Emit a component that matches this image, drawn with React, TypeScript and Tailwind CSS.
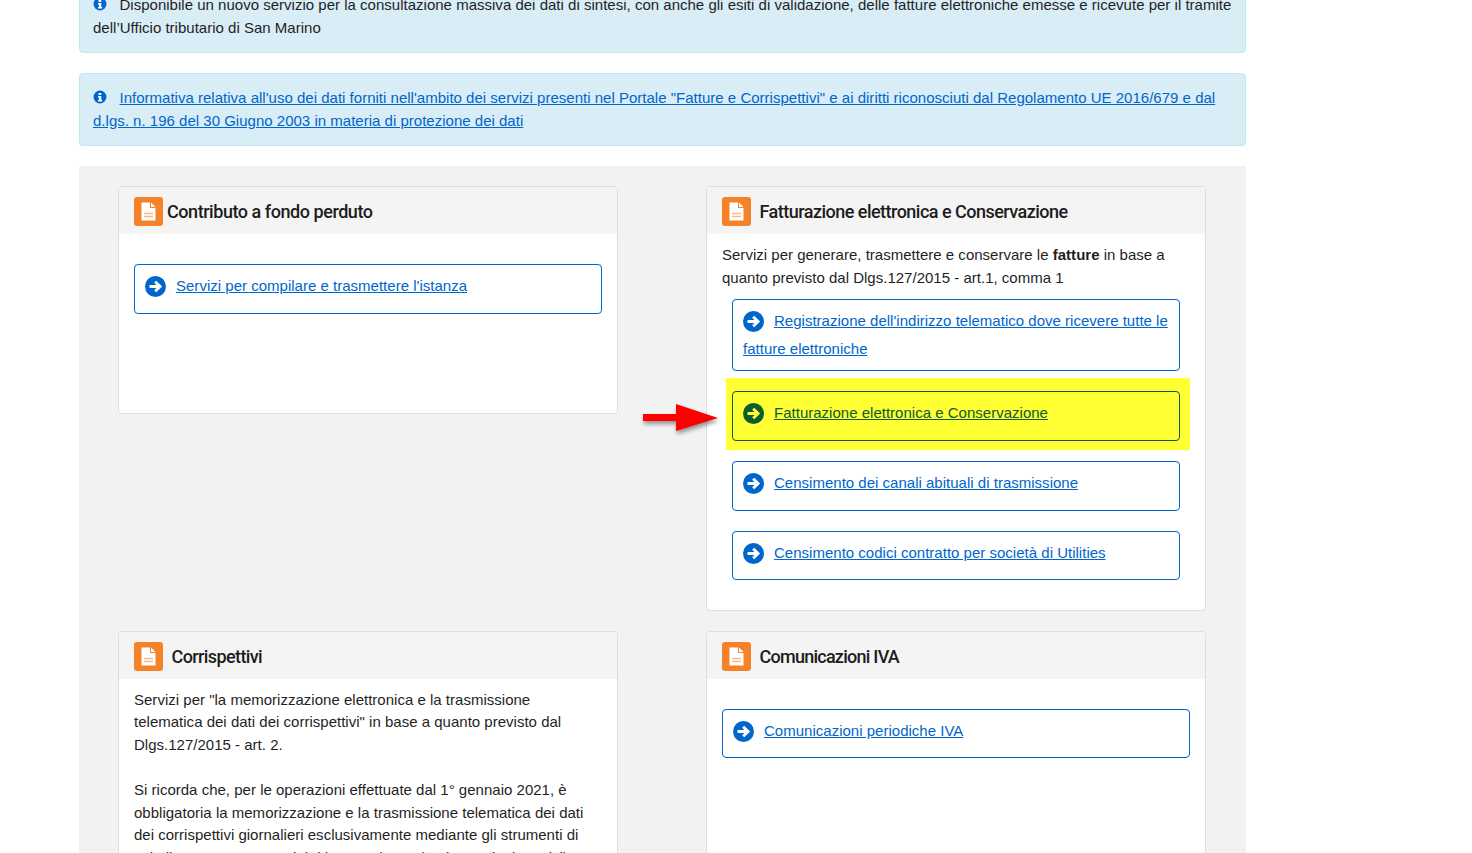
import React from 'react';

const InfoIcon: React.FC = () => (
  <svg className="mr-[12.5px] inline-block align-[-1px]" width="14" height="14" viewBox="0 0 14 14">
    <circle cx="7" cy="7" r="6.5" fill="#0066cc" />
    <path d="M5.5 3H8.3V5H5.5ZM5 6H8.3V10H9.2V11.4H5V10H5.9V7.4H5Z" fill="#fff" />
  </svg>
);

const ArrowIcon: React.FC<{ highlighted?: boolean }> = ({ highlighted }) => (
  <svg className="mr-[10px] inline-block align-[-6px]" width="21" height="21" viewBox="0 0 21 21">
    <circle cx="10.5" cy="10.5" r="10.5" fill="currentColor" />
    <path
      d="M4.5 10.5H14M10.2 5.8L15 10.5L10.2 15.2"
      fill="none"
      stroke={highlighted ? '#ffff33' : '#fff'}
      strokeWidth="3"
    />
  </svg>
);

const DocIcon: React.FC = () => (
  <div className="mt-[2px] flex h-[29px] w-[28.5px] shrink-0 items-center justify-center rounded-[3px] bg-[#f58228]">
    <svg width="15" height="19" viewBox="0 0 15 19">
      <path d="M0.5 0.5H9V6H14.5V18.5H0.5Z" fill="#fff" />
      <path d="M10 0.5L14.5 5H10Z" fill="#fff" />
      <path d="M3 11.5H12M3 14.5H12" stroke="#fbb98a" strokeWidth="1.5" />
    </svg>
  </div>
);

interface LinkBoxProps {
  label: string;
  highlighted?: boolean;
  heightClass?: string;
}

const LinkBox: React.FC<LinkBoxProps> = ({ label, highlighted, heightClass = 'min-h-[49.75px]' }) => (
  <div
    className={`rounded-[4px] border px-[10px] pt-[7px] pb-[7px] leading-[28px] ${heightClass} ${
      highlighted ? 'border-[#0b5c2e] text-[#0b5c2e]' : 'border-[#0066cc] bg-white text-[#0066cc]'
    }`}
  >
    <ArrowIcon highlighted={highlighted} />
    <a href="#" className="underline">
      {label}
    </a>
  </div>
);

interface CardProps {
  title: string;
  titleClass: string;
  children: React.ReactNode;
  className?: string;
}

const Card: React.FC<CardProps> = ({ title, titleClass, children, className }) => (
  <section className={`rounded-[4px] border border-[#dedede] bg-white ${className ?? ''}`}>
    <header className="flex h-[47px] items-center bg-[#f4f4f4] pl-[15px]">
      <DocIcon />
      <h2 className={`mt-[4px] font-['Roboto',sans-serif] text-[18px] font-medium text-[#1c1c1c] ${titleClass}`}>
        {title}
      </h2>
    </header>
    {children}
  </section>
);

export default function App() {
  return (
    <div className="h-[853px] overflow-hidden bg-white font-['Liberation_Sans',Arial,sans-serif] text-[15px] leading-[22.5px] tracking-[0.012px] text-[#1f1f1f]">
      <div className="ml-[79px] -mt-[20px] w-[1167px]">
        <div className="mb-[20px] rounded-[4px] border border-[#bce8f1] bg-[#d9edf7] p-[13px]">
          <InfoIcon />
          Disponibile un nuovo servizio per la consultazione massiva dei dati di sintesi, con anche gli esiti di
          validazione, delle fatture elettroniche emesse e ricevute per il tramite dell’Ufficio tributario di San Marino
        </div>
        <div className="mb-[20px] rounded-[4px] border border-[#bce8f1] bg-[#d9edf7] p-[13px] text-[#0066cc]">
          <InfoIcon />
          <a href="#" className="underline">
            Informativa relativa all'uso dei dati forniti nell'ambito dei servizi presenti nel Portale "Fatture e
            Corrispettivi" e ai diritti riconosciuti dal Regolamento UE 2016/679 e dal d.lgs. n. 196 del 30 Giugno 2003
            in materia di protezione dei dati
          </a>
        </div>

        <div className="relative grid grid-cols-[500px_500px] gap-x-[88px] gap-y-[20px] bg-[#f2f2f2] pt-[20px] pl-[39px]">
          <Card
            title="Contributo a fondo perduto"
            titleClass="ml-[4.5px] tracking-[-0.45px]"
            className="h-[228px] self-start"
          >
            <div className="mx-[15px] mt-[30px]">
              <LinkBox label="Servizi per compilare e trasmettere l'istanza" />
            </div>
          </Card>

          <Card title="Fatturazione elettronica e Conservazione" titleClass="ml-[9px] tracking-[-0.52px]">
            <p className="mx-[15px] mt-[10px]">
              Servizi per generare, trasmettere e conservare le <b>fatture</b> in base a quanto previsto dal
              Dlgs.127/2015 - art.1, comma 1
            </p>
            <div className="mx-[25px] mt-[10px] flex flex-col gap-[20px] pb-[29.75px]">
              <LinkBox label="Registrazione dell'indirizzo telematico dove ricevere tutte le fatture elettroniche" />
              <div className="-mt-[13px] -mr-[10px] -mb-[9.25px] -ml-[6px] bg-[#ffff33] pt-[13px] pr-[10px] pb-[9.25px] pl-[6px]">
                <LinkBox label="Fatturazione elettronica e Conservazione" highlighted />
              </div>
              <LinkBox label="Censimento dei canali abituali di trasmissione" />
              <LinkBox label="Censimento codici contratto per società di Utilities" />
            </div>
          </Card>

          <Card title="Corrispettivi" titleClass="ml-[9px] tracking-[-0.6px]">
            <div className="mx-[15px] mt-[9.75px]">
              <p>
                Servizi per "la memorizzazione elettronica e la trasmissione
                <br />
                telematica dei dati dei corrispettivi" in base a quanto previsto dal
                <br />
                Dlgs.127/2015 - art. 2.
              </p>
              <p className="mt-[22.75px]">
                Si ricorda che, per le operazioni effettuate dal 1° gennaio 2021, è
                <br />
                obbligatoria la memorizzazione e la trasmissione telematica dei dati
                <br />
                dei corrispettivi giornalieri esclusivamente mediante gli strumenti di
                <br />
                cui all'art. 2, comma 1, del d.lgs. 127/2015 (registratori telematici)
              </p>
            </div>
          </Card>

          <Card title="Comunicazioni IVA" titleClass="ml-[9px] tracking-[-0.75px]" className="min-h-[300px]">
            <div className="mx-[15px] mt-[30px]">
              <LinkBox label="Comunicazioni periodiche IVA" heightClass="min-h-[49px]" />
            </div>
          </Card>

          <svg
            className="absolute top-[237px] left-[564px] drop-shadow-[1px_3px_2px_rgba(0,0,0,0.4)]"
            width="76"
            height="29"
            viewBox="0 0 76 29"
          >
            <path d="M0 11H33V1L75 15L33 28V18H0Z" fill="#ff0000" />
          </svg>
        </div>
      </div>
    </div>
  );
}
